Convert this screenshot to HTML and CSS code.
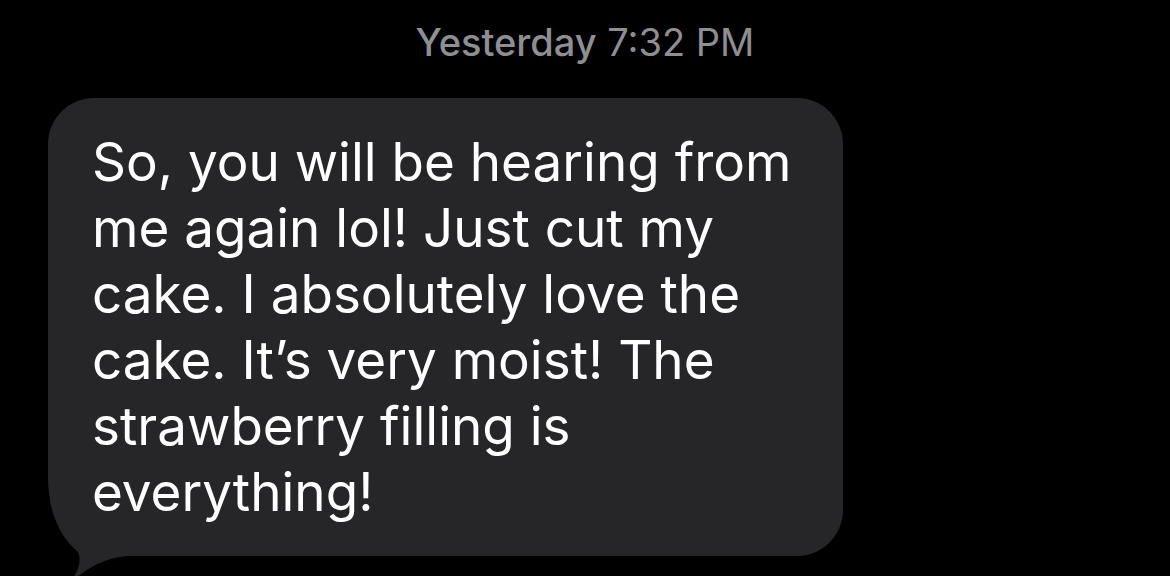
FILE: index.html
```html
<!DOCTYPE html>
<html lang="en">
<head>
    <meta charset="UTF-8">
    <title>Messages</title>
    <link rel="stylesheet" href="styles.css">
</head>
<body>
    <div class="thread">
        <div class="stamp"><span class="stamp-day">Yesterday</span> 7:32 PM</div>

        <div class="bubble">
            <p class="bubble-text">So, you will be hearing from me again lol! Just cut my cake. I absolutely love the cake. It’s very moist! The strawberry filling is everything!</p>
            <!-- tail: black fill trims the square corner, grey is the tail itself -->
            <svg class="tail" width="80" height="110" viewBox="0 0 80 110">
                <rect x="0" y="0" width="80" height="110" fill="#000"/>
                <path d="M0 0 C0 40 14 62 30 76 C34 86 30 96 22 106 C36 96 52 82 80 80 L80 0 Z" fill="#262629"/>
            </svg>
        </div>
    </div>
</body>
</html>
```

FILE: styles.css
```css
body {
    margin: 0;
    background-color: #000;
    font-family: Inter, "Noto Sans", sans-serif;
    overflow: hidden;
}

.thread {
    width: 1170px;
    height: 576px;
}

.stamp {
    text-align: center;
    color: #8e8e93;
    font-size: 38px;
    line-height: 46px;
    padding-top: 19px;
}

.stamp-day {
    font-weight: 500;
}

.bubble {
    position: relative;
    margin-top: 33px;
    margin-left: 48px;
    width: 795px;
    height: 458px;
    box-sizing: border-box;
    padding: 31px 30px 0 44px;
    background-color: #262629;
    border-radius: 46px 46px 46px 0;
}

.bubble-text {
    position: relative;
    z-index: 1;
    margin: 0;
    color: #fff;
    font-size: 53px;
    line-height: 66px;
}

.tail {
    position: absolute;
    left: 0;
    bottom: -30px;
}
```
